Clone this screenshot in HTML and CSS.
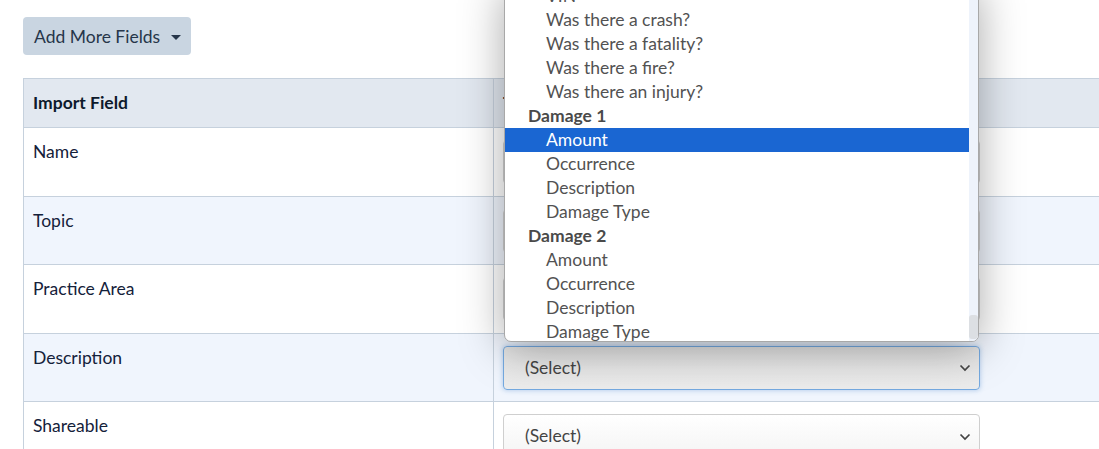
FILE: index.html
```html
<!DOCTYPE html>
<html lang="en">
<head>
    <meta charset="UTF-8">
    <title>Import Fields</title>
    <link rel="stylesheet" href="styles.css">
</head>
<body>
    <div class="page">
        <button class="more-btn">Add More Fields <span class="caret"></span></button>

        <table class="map-table">
            <thead>
                <tr>
                    <th class="col-import">Import Field</th>
                    <th class="col-target">Target Field</th>
                </tr>
            </thead>
            <tbody>
                <tr>
                    <td>Name</td>
                    <td><div class="fake-select"><span>(Select)</span><svg width="14" height="9" viewBox="0 0 14 9"><path d="M2.5 2.5l4.5 4.5 4.5-4.5" fill="none" stroke="#444" stroke-width="1.7"/></svg></div></td>
                </tr>
                <tr class="alt">
                    <td>Topic</td>
                    <td><div class="fake-select"><span>(Select)</span><svg width="14" height="9" viewBox="0 0 14 9"><path d="M2.5 2.5l4.5 4.5 4.5-4.5" fill="none" stroke="#444" stroke-width="1.7"/></svg></div></td>
                </tr>
                <tr>
                    <td>Practice Area</td>
                    <td><div class="fake-select"><span>(Select)</span><svg width="14" height="9" viewBox="0 0 14 9"><path d="M2.5 2.5l4.5 4.5 4.5-4.5" fill="none" stroke="#444" stroke-width="1.7"/></svg></div></td>
                </tr>
                <tr class="alt">
                    <td>Description</td>
                    <td><div class="fake-select focused"><span>(Select)</span><svg width="14" height="9" viewBox="0 0 14 9"><path d="M2.5 2.5l4.5 4.5 4.5-4.5" fill="none" stroke="#444" stroke-width="1.7"/></svg></div></td>
                </tr>
                <tr>
                    <td>Shareable</td>
                    <td><div class="fake-select"><span>(Select)</span><svg width="14" height="9" viewBox="0 0 14 9"><path d="M2.5 2.5l4.5 4.5 4.5-4.5" fill="none" stroke="#444" stroke-width="1.7"/></svg></div></td>
                </tr>
            </tbody>
        </table>
    </div>

    <!-- open option list of the Description select -->
    <div class="dropdown">
        <ul class="options">
            <li class="opt">VIN</li>
            <li class="opt">Was there a crash?</li>
            <li class="opt">Was there a fatality?</li>
            <li class="opt">Was there a fire?</li>
            <li class="opt">Was there an injury?</li>
            <li class="group">Damage 1</li>
            <li class="opt selected">Amount</li>
            <li class="opt">Occurrence</li>
            <li class="opt">Description</li>
            <li class="opt">Damage Type</li>
            <li class="group">Damage 2</li>
            <li class="opt">Amount</li>
            <li class="opt">Occurrence</li>
            <li class="opt">Description</li>
            <li class="opt">Damage Type</li>
        </ul>
        <div class="scrollbar"><div class="thumb"></div></div>
    </div>
</body>
</html>
```

FILE: styles.css
```css
:root {
    --text: #14213a;
    --border: #c6d1dd;
    --head: #e2e8f0;
    --alt: #f0f5fd;
    --btn: #c9d5e1;
    --blue: #1a66d2;
}

* {
    box-sizing: border-box;
    margin: 0;
    padding: 0;
}

body {
    font-family: Lato, 'Open Sans', sans-serif;
    font-size: 17.5px;
    color: var(--text);
    background: #fff;
    overflow: hidden;
}

.page {
    padding: 17px 0 0 23px;
}

.more-btn {
    display: flex;
    align-items: center;
    gap: 11px;
    height: 38px;
    padding: 0 10px 0 11px;
    border: none;
    border-radius: 4px;
    background: var(--btn);
    color: #26364a;
    font-family: inherit;
    font-size: 17.5px;
}

.caret {
    width: 0;
    height: 0;
    border-left: 5px solid transparent;
    border-right: 5px solid transparent;
    border-top: 5px solid #26364a;
    margin-top: 2px;
}

.map-table {
    margin-top: 23px;
    width: 1200px;
    border-collapse: collapse;
    table-layout: fixed;
}

.map-table th,
.map-table td {
    border: 1px solid var(--border);
    text-align: left;
    vertical-align: top;
}

.map-table th {
    background: var(--head);
    font-weight: 700;
    height: 49px;
    padding: 0 9px 1px;
    vertical-align: middle;
    color: #0d1a2c;
    line-height: 22px;
}

.col-import {
    width: 470px;
}

.map-table td {
    padding: 12px 9px 11.5px;
    line-height: 24px;
}

.map-table tr.alt td {
    background: var(--alt);
}

.fake-select {
    display: flex;
    align-items: center;
    justify-content: space-between;
    width: 477px;
    height: 44px;
    padding: 0 7px 0 21px;
    border: 1px solid #cfcfcf;
    border-radius: 4px;
    background: linear-gradient(#fff, #f4f4f4);
    color: #444;
}

.fake-select.focused {
    border-color: #74a9e0;
    background: linear-gradient(#e4e4e4, #ececec);
    box-shadow: 0 0 5px rgba(80, 140, 210, 0.45);
}

.dropdown {
    position: absolute;
    left: 504px;
    top: -17px;
    width: 475px;
    height: 359px;
    overflow: hidden;
    background: #fff;
    border: 1px solid #a8a8a8;
    border-radius: 0 0 7px 7px;
    box-shadow: 0 6px 44px rgba(0, 0, 0, 0.34);
}

.options {
    list-style: none;
    margin-right: 9px;
}

.options li {
    height: 24px;
    line-height: 24px;
    white-space: nowrap;
}

.opt {
    padding-left: 41px;
    color: #525252;
}

.group {
    padding-left: 23px;
    font-weight: 700;
    color: #4a4a4a;
}

.opt.selected {
    background: var(--blue);
    color: #fff;
}

.scrollbar {
    position: absolute;
    top: 0;
    right: 0;
    bottom: 0;
    width: 9px;
    background: #eef3fb;
}

.thumb {
    position: absolute;
    left: 0;
    right: 0;
    bottom: 2px;
    height: 24px;
    border-radius: 3px;
    background: #dcdfe3;
}
```
